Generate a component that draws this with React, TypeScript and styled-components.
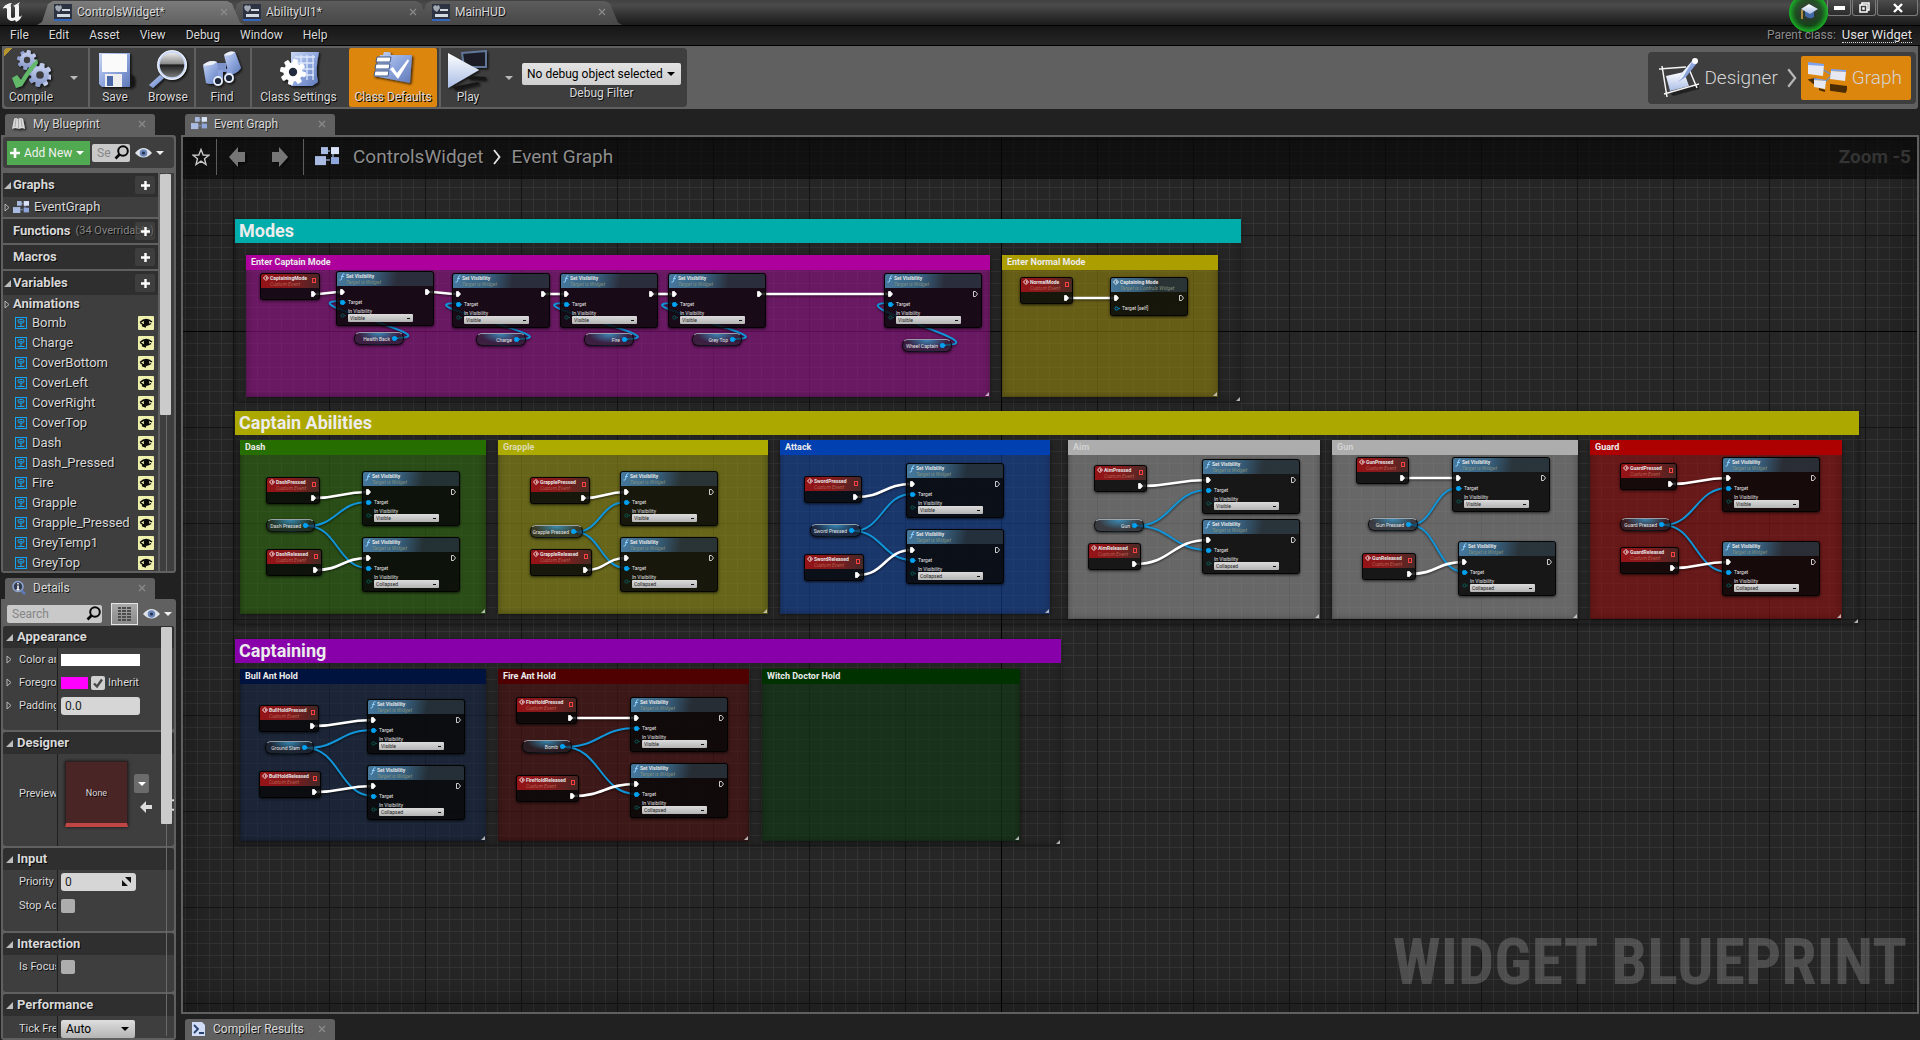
import React, { useId, useState } from 'react';
import styled, { createGlobalStyle, css } from 'styled-components';

/* ------------------------------------------------------------------ */
/* Theme                                                               */
/* ------------------------------------------------------------------ */

const color = {
  window: '#212121',
  frame: '#606060',
  panel: '#3e3e3e',
  header: '#2f2f2f',
  text: '#d8d8d8',
  orange: '#dd860d',
  green: '#51a951',
};

const Global = createGlobalStyle`
  * { box-sizing: border-box; }
  html, body { margin: 0; background: ${color.window}; }
  body, button, input, select {
    font-family: Roboto, "Liberation Sans", sans-serif;
    font-size: 12px;
    line-height: 16px;
    color: ${color.text};
  }
  button, input, select { margin: 0; padding: 0; border: 0; border-radius: 0; outline: 0; }
  button { background: none; cursor: pointer; }
  svg { display: block; flex: none; }
`;

const Window = styled.div`
  display: flex;
  flex-direction: column;
  height: 100vh;
  overflow: hidden;
  background: ${color.window};
  text-shadow: 1px 1px 0 rgba(0, 0, 0, 0.8);
`;

/* ------------------------------------------------------------------ */
/* Title bar                                                           */
/* ------------------------------------------------------------------ */

const TitleBar = styled.header`
  position: relative;
  display: flex;
  flex: none;
  height: 25px;
  padding-left: 3px;
  background: linear-gradient(#414141, #4b4b4b 20%, #2b2b2b 70%, #1b1b1b);
`;

const TabStrip = styled.nav`
  display: flex;
  flex: 1;
  align-items: flex-end;
  padding-left: 10px;
`;

const DocTab = styled.div<{ $active?: boolean; $level: number }>`
  position: relative;
  z-index: ${(p) => p.$level};
  display: flex;
  align-items: center;
  gap: 5px;
  width: 207px;
  height: 24px;
  padding: 0 16px 2px 17px;
  background: ${(p) => (p.$active ? 'linear-gradient(#7b7b7b, #606060)' : 'linear-gradient(#5c5c5c, #474747)')};
  clip-path: polygon(0 100%, 5px 88%, 11px 12%, 16px 0, 190px 0, 195px 10%, 203px 90%, 207px 100%);
  & + & { margin-left: -18px; }
`;

const TabLabel = styled.span`
  flex: 1;
  white-space: nowrap;
`;

const CloseMark = styled.button`
  width: 8px;
  height: 8px;
  color: #8b8b8b;
`;

const WindowControls = styled.div`
  display: flex;
  gap: 1px;
  padding-right: 2px;
`;

const WindowButton = styled.button<{ $wide?: boolean }>`
  display: flex;
  align-items: center;
  justify-content: center;
  width: ${(p) => (p.$wide ? 41 : 24)}px;
  height: 16px;
  border: 1px solid #7c7c7c;
  border-top: 0;
  border-radius: 0 0 3px 3px;
  background: linear-gradient(#4c4c4c, #2b2b2b);
`;

const Tutorial = styled.button`
  position: absolute;
  top: -7px;
  right: 92px;
  z-index: 10;
  display: flex;
  align-items: center;
  justify-content: center;
  width: 39px;
  height: 39px;
  border: 1px solid #16b322;
  border-radius: 50%;
  background: radial-gradient(circle, rgba(40, 60, 42, 0.75) 25%, rgba(20, 90, 25, 0.7) 50%, #19b325 75%);
`;

const MenuBar = styled.div`
  display: flex;
  flex: none;
  align-items: center;
  height: 21px;
  padding-bottom: 2px;
  border-top: 1px solid #000;
  border-bottom: 1px solid #000;
  background: linear-gradient(#161616, #262626);
`;

const MenuItem = styled.button`
  padding: 0 10px;
  text-shadow: 1px 1px 0 #000;
`;

const ParentClass = styled.div`
  display: flex;
  gap: 6px;
  margin-left: auto;
  padding-right: 8px;
  color: #8c8c8c;
`;

const ClassLink = styled.a`
  height: 16px;
  border-bottom: 1px dotted #d8d8d8;
  color: #e2e2e2;
  font-size: 13px;
  text-decoration: none;
`;

/* ------------------------------------------------------------------ */
/* Toolbar                                                             */
/* ------------------------------------------------------------------ */

const ToolbarRow = styled.div`
  display: flex;
  flex: none;
  align-items: center;
  justify-content: space-between;
  height: 63px;
  margin: 0 2px;
  border-radius: 0 0 3px 3px;
  background: ${color.frame};
`;

const Tools = styled.div`
  display: flex;
  height: 59px;
  margin-left: 2px;
  border-radius: 4px;
  background: linear-gradient(135deg, #b6962c 6px, transparent 6px) ${color.panel};
`;

const ToolGroup = styled.div`
  display: flex;
  gap: 4px;
  padding-right: 2px;
  & + & { border-left: 2px solid ${color.frame}; }
`;

const ToolButton = styled.button<{ $width: number; $active?: boolean }>`
  display: flex;
  flex-direction: column;
  align-items: center;
  width: ${(p) => p.$width}px;
  padding-top: 2px;
  border-radius: 2px;
  background: ${(p) => (p.$active ? color.orange : 'none')};
  white-space: nowrap;
  text-shadow: 1px 1px 0 #000;
  svg { margin-bottom: -1px; }
`;

const DropArrow = styled.button<{ $width: number }>`
  display: flex;
  align-items: center;
  justify-content: center;
  width: ${(p) => p.$width}px;
  color: #b9b9b9;
`;

const DebugFilter = styled.div`
  display: flex;
  flex-direction: column;
  align-items: center;
  padding: 15px 4px 0 0;
`;

const SelectWrap = styled.span`
  position: relative;
  display: inline-flex;
  align-items: center;
  svg { position: absolute; right: 6px; pointer-events: none; color: #000; }
`;

const DebugSelect = styled.select`
  appearance: none;
  width: 159px;
  height: 22px;
  padding: 0 18px 0 5px;
  border-radius: 2px;
  background: linear-gradient(#e2e2e2, #cfcfcf);
  color: #000;
`;

const Modes = styled.div`
  display: flex;
  align-items: center;
  height: 52px;
  margin-right: 2px;
  padding: 0 5px 0 5px;
  border-radius: 4px;
  background: ${color.panel};
`;

const ModeButton = styled.button<{ $active?: boolean }>`
  display: flex;
  align-items: center;
  gap: 5px;
  height: 44px;
  padding: 0 9px 0 6px;
  border-radius: 2px;
  background: ${(p) => (p.$active ? color.orange : 'none')};
  color: #d4d4d4;
  font-size: 19px;
  font-weight: 300;
`;

/* ------------------------------------------------------------------ */
/* Panels                                                              */
/* ------------------------------------------------------------------ */

const Workspace = styled.main`
  display: flex;
  flex: 1;
  gap: 5px;
  min-height: 0;
  padding: 5px 1px 0 1px;
`;

const Sidebar = styled.aside`
  display: flex;
  flex: none;
  flex-direction: column;
  gap: 5px;
  width: 175px;
  min-height: 0;
`;

const Dock = styled.div<{ $fixed?: boolean }>`
  display: flex;
  flex: ${(p) => (p.$fixed ? 'none' : '1 1 0')};
  flex-direction: column;
  min-height: 0;
`;

const PanelTab = styled.div`
  display: flex;
  flex: none;
  align-items: center;
  gap: 7px;
  width: 150px;
  height: 21px;
  margin-left: 4px;
  padding: 0 9px 2px 6px;
  border-radius: 3px 3px 0 0;
  background: ${color.frame};
`;

const Panel = styled.section<{ $height?: number }>`
  display: flex;
  flex-direction: column;
  flex: ${(p) => (p.$height ? `0 0 ${p.$height}px` : '1 1 0')};
  min-height: 0;
  padding: 2px;
  border-radius: 0 3px 3px 3px;
  background: ${color.frame};
`;

const FilterRow = styled.div<{ $filled?: boolean }>`
  display: flex;
  flex: none;
  align-items: center;
  height: ${(p) => (p.$filled ? 31 : 25)}px;
  padding-left: 4px;
  border-radius: 3px;
  background: ${(p) => (p.$filled ? color.panel : 'none')};
`;

const AddNew = styled.button`
  display: flex;
  flex: none;
  align-items: center;
  gap: 4px;
  width: 83px;
  height: 24px;
  padding: 0 3px;
  background: ${color.green};
  color: #f0f0f0;
  white-space: nowrap;
`;

const SearchBox = styled.label<{ $width: number; $gap: number }>`
  display: flex;
  flex: none;
  align-items: center;
  width: ${(p) => p.$width}px;
  height: 18px;
  margin-left: ${(p) => p.$gap}px;
  padding: 0 1px 0 5px;
  border-radius: 2px;
  background: #c9c9c9;
`;

const SearchInput = styled.input`
  flex: 1;
  width: 0;
  min-width: 0;
  margin-right: 3px;
  background: none;
  color: #222;
  &::placeholder { color: #868686; opacity: 1; }
`;

const ViewOptions = styled.button`
  display: flex;
  flex: none;
  align-items: center;
  gap: 4px;
  margin-left: 5px;
  color: #f0f0f0;
`;

const MatrixButton = styled.button`
  display: flex;
  flex: none;
  align-items: center;
  justify-content: center;
  width: 27px;
  height: 22px;
  margin-left: 9px;
  border: 1px solid #e4e4e4;
  background: linear-gradient(#a9a9a9, #8a8a8a);
`;

const BlueprintBody = styled.div`
  display: flex;
  flex: 1;
  min-height: 0;
  margin-top: 5px;
  overflow: hidden;
  background: ${color.panel};
`;

const Tree = styled.div`
  display: flex;
  flex: 1;
  flex-direction: column;
  gap: 2px;
  min-width: 0;
  background: ${color.frame};
`;

const TreeSection = styled.div`
  flex: none;
  background: ${color.panel};
`;

const SectionHead = styled.div`
  position: relative;
  display: flex;
  align-items: center;
  height: 24px;
  padding-left: 1px;
  background: ${color.header};
  font-size: 13px;
  font-weight: 700;
  white-space: nowrap;
`;

const Twisty = styled.span<{ $width: number }>`
  display: flex;
  flex: none;
  width: ${(p) => p.$width}px;
`;

const HeadNote = styled.span`
  margin-left: 5px;
  color: #858585;
  font-size: 11px;
  font-weight: 400;
`;

const AddButton = styled.button`
  position: absolute;
  right: 3px;
  display: flex;
  align-items: center;
  justify-content: center;
  width: 20px;
  height: 18px;
  border-radius: 2px;
  background: rgba(75, 75, 75, 0.55);
`;

const TreeRow = styled.div<{ $bold?: boolean; $indent?: number }>`
  display: flex;
  align-items: center;
  height: ${(p) => (p.$bold ? 18 : 20)}px;
  padding: 0 4px 0 ${(p) => p.$indent ?? 1}px;
  font-size: 13px;
  font-weight: ${(p) => (p.$bold ? 700 : 400)};
`;

const RowName = styled.span`
  flex: 1;
  margin-left: 5px;
  white-space: nowrap;
`;

const VisibilityToggle = styled.button`
  display: flex;
  align-items: center;
  justify-content: center;
  width: 16px;
  height: 14px;
  border-radius: 1px;
  background: #efefae;
`;

const ScrollTrack = styled.div`
  flex: none;
  width: 16px;
  padding: 1px 3px 0 2px;
  background: linear-gradient(90deg, ${color.frame} 2px, transparent 2px 8px, #6a6a6a 8px 9px, transparent 9px);
`;

const ScrollThumb = styled.div<{ $height: number }>`
  height: ${(p) => p.$height}px;
  border-radius: 1px;
  background: #cbcbcb;
`;

const DetailsBody = styled.div`
  position: relative;
  flex: 1;
  min-height: 0;
  overflow: hidden;
`;

const DetailsScroll = styled.div`
  position: absolute;
  top: 1px;
  right: 2px;
  bottom: 2px;
  width: 11px;
  background: linear-gradient(90deg, transparent 5px, #6a6a6a 5px 6px, transparent 6px);
`;

const Category = styled.div<{ $body: number }>`
  height: ${(p) => p.$body + 22}px;
  margin-bottom: 2px;
  overflow: hidden;
  border-radius: 3px;
  background: linear-gradient(90deg, transparent 54px, #1f1f1f 54px 55px, transparent 55px) ${color.panel};
`;

const CategoryHead = styled.h2`
  display: flex;
  align-items: center;
  height: 22px;
  margin: 0;
  padding-left: 3px;
  background: ${color.header};
  font-size: 13px;
  font-weight: 700;
  line-height: 16px;
`;

const Prop = styled.div<{ $height?: number }>`
  display: flex;
  align-items: center;
  height: ${(p) => p.$height ?? 23}px;
  font-size: 11px;
`;

const PropName = styled.label`
  display: flex;
  flex: none;
  align-items: center;
  width: 53px;
  margin-right: 5px;
  padding-left: 3px;
  overflow: hidden;
  white-space: nowrap;
`;

const Swatch = styled.button<{ $color: string; $width: number }>`
  width: ${(p) => p.$width}px;
  height: 12px;
  background: ${(p) => p.$color};
`;

const NumberBox = styled.span<{ $width: number }>`
  display: flex;
  align-items: center;
  width: ${(p) => p.$width}px;
  height: 18px;
  padding: 0 5px 0 4px;
  border-radius: 3px;
  background: #d6d6d6;
`;

const NumberInput = styled.input`
  flex: 1;
  min-width: 0;
  width: 0;
  background: none;
  color: #222;
`;

const Check = styled.input.attrs({ type: 'checkbox' })`
  appearance: none;
  width: 14px;
  height: 14px;
  border-radius: 2px;
  background: #adadad;
  &:checked {
    background: #d0d0d0 url("data:image/svg+xml,%3Csvg xmlns='http://www.w3.org/2000/svg' viewBox='0 0 14 14'%3E%3Cpath d='M3 7.5 6 10.5 11 3.5' fill='none' stroke='%23484848' stroke-width='2.4'/%3E%3C/svg%3E");
  }
`;

const InheritLabel = styled.label`
  display: flex;
  align-items: center;
  gap: 3px;
  margin-left: 3px;
`;

const Thumbnail = styled.div`
  display: flex;
  align-items: center;
  justify-content: center;
  width: 66px;
  height: 66px;
  margin-left: 4px;
  border: 1px solid #2a2222;
  border-bottom: 4px solid #c04646;
  background: #4a2526;
  box-shadow: 0 0 3px #111;
  font-size: 9px;
`;

const AssetActions = styled.div`
  display: flex;
  flex-direction: column;
  gap: 6px;
  margin-left: 6px;
`;

const AssetMenu = styled.button`
  display: flex;
  align-items: center;
  justify-content: center;
  width: 15px;
  height: 19px;
  border-radius: 2px;
  background: #6b6b6b;
`;

const AssetTools = styled.div`
  display: flex;
  align-items: center;
  gap: 12px;
  width: 40px;
  padding-left: 6px;
`;

const TickSelect = styled.select`
  appearance: none;
  width: 74px;
  height: 18px;
  padding-left: 5px;
  border-radius: 2px;
  background: linear-gradient(#dedede, #b4b4b4);
  color: #000;
`;

/* ------------------------------------------------------------------ */
/* Graph                                                               */
/* ------------------------------------------------------------------ */

const GraphColumn = styled.div`
  display: flex;
  flex: 1;
  flex-direction: column;
  min-width: 0;
`;

const GraphFrame = styled.div`
  flex: 1;
  min-height: 0;
  margin-bottom: 5px;
  padding: 2px;
  background: ${color.frame};
`;

const Canvas = styled.div`
  position: relative;
  height: 100%;
  overflow: hidden;
  background-color: #262626;
  background-image:
    linear-gradient(#000, #000),
    linear-gradient(#000, #000),
    linear-gradient(90deg, #151515 1px, transparent 1px),
    linear-gradient(#151515 1px, transparent 1px),
    linear-gradient(90deg, #343434 1px, transparent 1px),
    linear-gradient(#343434 1px, transparent 1px);
  background-size: 1px 100%, 100% 1px, 96px 96px, 96px 96px, 12px 12px, 12px 12px;
  background-position: 818px 0, 0 194px, 50px 2px, 50px 2px, 2px 2px, 2px 2px;
  background-repeat: no-repeat, no-repeat, repeat, repeat, repeat, repeat;
`;

const Vignette = styled.div`
  position: absolute;
  inset: 0;
  pointer-events: none;
  box-shadow: inset 0 0 50px rgba(0, 0, 0, 0.4);
`;

const Breadcrumbs = styled.div`
  position: relative;
  z-index: 2;
  display: flex;
  align-items: center;
  height: 42px;
  padding: 0 6px 2px 9px;
  background: rgba(8, 8, 8, 0.66);
  color: #8e8e8e;
  font-size: 19px;
`;

const BarRule = styled.span<{ $before: number; $after: number }>`
  width: 1px;
  height: 36px;
  margin: 0 ${(p) => p.$after}px 0 ${(p) => p.$before}px;
  background: #5d5d5d;
`;

const NavButton = styled.button<{ $before?: number; $after?: number }>`
  margin: 0 ${(p) => p.$after ?? 0}px 0 ${(p) => p.$before ?? 0}px;
`;

const Crumb = styled.a`
  color: inherit;
  text-decoration: none;
`;

const ZoomLabel = styled.span`
  margin-left: auto;
  color: #343434;
  font-weight: 700;
  text-shadow: none;
`;

const Watermark = styled.div`
  position: absolute;
  right: 10px;
  bottom: 12px;
  color: rgba(150, 150, 150, 0.36);
  font-family: "Roboto Condensed", "Liberation Sans Narrow", Roboto, sans-serif;
  font-size: 64px;
  font-weight: 700;
  line-height: 74px;
  text-shadow: none;
  white-space: nowrap;
`;

/* Position of the view's top left corner in graph space. */
const VIEW = { x: 183, y: 137 };

type Box = { $x: number; $y: number; $w?: number; $h?: number };

const placed = (p: Box) => ({
  style: { left: p.$x - VIEW.x, top: p.$y - VIEW.y, width: p.$w, height: p.$h },
});

const Comment = styled.div.attrs<Box>(placed)<Box & { $fill: string }>`
  position: absolute;
  border: 1px solid rgba(0, 0, 0, 0.18);
  background: ${(p) => p.$fill};
  box-shadow: 0 1px 4px rgba(0, 0, 0, 0.5), inset 0 0 6px rgba(0, 0, 0, 0.2);
  & > svg { position: absolute; right: 0; bottom: 0; }
`;

const CommentTitle = styled.h3<{ $bar: string; $large?: boolean; $ink?: string }>`
  margin: -1px;
  height: ${(p) => (p.$large ? 24 : 15)}px;
  padding-left: ${(p) => (p.$large ? 4 : 5)}px;
  background: ${(p) => p.$bar};
  color: ${(p) => p.$ink ?? '#ececec'};
  font-size: ${(p) => (p.$large ? 18 : 9)}px;
  line-height: ${(p) => (p.$large ? 24 : 15)}px;
  font-weight: 700;
  text-shadow: none;
`;

const nodeBase = css`
  position: absolute;
  overflow: hidden;
  border: 1px solid rgba(0, 0, 0, 0.75);
  border-radius: 3px;
  background: rgba(8, 8, 8, 0.84);
  box-shadow: 0 1px 3px rgba(0, 0, 0, 0.7);
  color: #e4e4e4;
  font-size: 5px;
  line-height: 6px;
  text-shadow: none;
  white-space: nowrap;
`;

const EventNode = styled.div.attrs<Box>(placed)<Box>`
  ${nodeBase}
  height: 27px;
`;

const FunctionNode = styled.div.attrs<Box>(placed)<Box>`
  ${nodeBase}
`;

const NodeHead = styled.div<{ $kind: 'event' | 'function' }>`
  display: flex;
  gap: 1px;
  height: 14px;
  padding: 1px 3px 0 2px;
  background: ${(p) =>
    p.$kind === 'event'
      ? 'linear-gradient(90deg, #951317, #861a1c 50%, rgba(110, 60, 55, 0.55))'
      : 'linear-gradient(100deg, #47799d, #37607e 38%, rgba(60, 80, 95, 0.5) 62%)'};
`;

const NodeNames = styled.div`
  display: flex;
  flex: 1;
  flex-direction: column;
`;

const NodeTitle = styled.b`
  font-weight: 700;
  line-height: 6px;
`;

const NodeNote = styled.i<{ $kind: 'event' | 'function' }>`
  color: ${(p) => (p.$kind === 'event' ? '#b0604f' : '#84927c')};
  line-height: 6px;
`;

const Delegate = styled.span`
  width: 4px;
  height: 5px;
  margin-top: 3px;
  border: 1px solid #ff4040;
`;

const PinRow = styled.div<{ $height: number }>`
  display: flex;
  align-items: center;
  justify-content: space-between;
  height: ${(p) => p.$height}px;
  padding: 0 3px;
`;

const PinLabel = styled.span`
  display: flex;
  flex: 1;
  gap: 2px;
  align-items: center;
`;

const ValueRow = styled.div`
  display: flex;
  gap: 2px;
  align-items: center;
  padding: 2px 0 0 3px;
`;

const ValueColumn = styled.label`
  display: flex;
  flex-direction: column;
`;

const ValueSelect = styled.select`
  appearance: none;
  width: 65px;
  height: 8px;
  padding-left: 2px;
  border-radius: 1px;
  background:
    linear-gradient(#111, #111) 59px 4px / 3px 1px no-repeat,
    linear-gradient(#dcdcdc, #b4b4b4);
  color: #222;
  font-size: 5px;
  line-height: 8px;
`;

const VariableNode = styled.div.attrs<Box>(placed)<Box>`
  ${nodeBase}
  display: flex;
  align-items: center;
  justify-content: flex-end;
  gap: 2px;
  height: 13px;
  padding-right: 5px;
  border-top-color: rgba(190, 200, 210, 0.75);
  border-radius: 6px;
  background:
    radial-gradient(ellipse at 50% 0, rgba(60, 160, 210, 0.8), transparent 60%),
    rgba(30, 34, 44, 0.62);
`;

const Wires = styled.svg`
  position: absolute;
  inset: 0;
  width: 100%;
  height: 100%;
  fill: none;
  filter: drop-shadow(0 1px 1px rgba(0, 0, 0, 0.6));
`;

/* ------------------------------------------------------------------ */
/* Icons                                                               */
/* ------------------------------------------------------------------ */

const PaintDefs = styled.svg`
  position: absolute;
`;

const Paints = () => (
  <PaintDefs width="0" height="0" aria-hidden="true">
    <defs>
      <linearGradient id="steel" x1="0" y1="0" x2="1" y2="1">
        <stop offset="0" stopColor="#c9d6f4" />
        <stop offset="0.5" stopColor="#8fa7de" />
        <stop offset="1" stopColor="#5f79b8" />
      </linearGradient>
      <linearGradient id="cog" x1="0" y1="0" x2="0" y2="1">
        <stop offset="0" stopColor="#c3cdec" />
        <stop offset="1" stopColor="#8b9ccc" />
      </linearGradient>
      <linearGradient id="pale" x1="0" y1="0" x2="0" y2="1">
        <stop offset="0" stopColor="#ffffff" />
        <stop offset="1" stopColor="#a9bde6" />
      </linearGradient>
      <linearGradient id="lens" x1="0" y1="0" x2="0" y2="1">
        <stop offset="0" stopColor="#f4f4f4" />
        <stop offset="0.45" stopColor="#8c8c8c" />
        <stop offset="0.5" stopColor="#1d1d1d" />
        <stop offset="1" stopColor="#858585" />
      </linearGradient>
      <filter id="cast" x="-20%" y="-20%" width="150%" height="150%">
        <feDropShadow dx="1.5" dy="1.5" stdDeviation="1" floodColor="#000" floodOpacity="0.75" />
      </filter>
    </defs>
  </PaintDefs>
);

const Gear = ({ x, y, r, fill = 'url(#cog)', hole = '#3e3e3e' }: { x: number; y: number; r: number; fill?: string; hole?: string }) => (
  <g transform={`translate(${x} ${y})`}>
    {[0, 45, 90, 135].map((a) => (
      <rect key={a} x={-r * 0.2} y={-r} width={r * 0.4} height={r * 2} rx={r * 0.1} transform={`rotate(${a + 12})`} fill={fill} />
    ))}
    <circle r={r * 0.74} fill={fill} />
    <circle r={r * 0.32} fill={hole} />
  </g>
);

const CompileIcon = () => (
  <svg width="40" height="40" viewBox="0 0 40 40" filter="url(#cast)">
    <Gear x={16} y={10} r={10} />
    <Gear x={29} y={25} r={12} />
    <path d="M1 28 6 25 10 30 Q16 19 26 9 L27 13 Q18 24 11 36 L5 38Z" fill="#62b96b" />
  </svg>
);

const SaveIcon = () => (
  <svg width="40" height="40" viewBox="0 0 40 40" filter="url(#cast)">
    <path d="M34 22 39 27V35L34 38Z" fill="#161616" />
    <path d="M4 3H35V37H7L4 34Z" fill="url(#steel)" />
    <rect x="7" y="4" width="25" height="18" fill="#fafafa" />
    <rect x="10" y="24" width="17" height="13" fill="#eee" />
    <rect x="12" y="26" width="6" height="10" fill="#4c67a8" />
  </svg>
);

const BrowseIcon = () => (
  <svg width="40" height="40" viewBox="0 0 40 40" filter="url(#cast)">
    <path d="M1 35 12 25 16 28 5 38Z" fill="url(#steel)" />
    <circle cx="24" cy="15" r="13.500" fill="url(#lens)" stroke="#c9d8f6" strokeWidth="2.500" />
    <circle cx="24" cy="15" r="14.500" fill="none" stroke="#fff" strokeWidth="0.800" />
  </svg>
);

const FindIcon = () => (
  <svg width="40" height="40" viewBox="0 0 40 40" filter="url(#cast)">
    <rect x="15" y="13" width="9" height="9" fill="#7b93cc" />
    <path d="M1 15 Q8 9 15 12 L18 30 Q11 36 4 33Z" fill="url(#steel)" />
    <path d="M22 5 Q27 0 33 2 L39 18 Q35 24 27 25Z" fill="url(#steel)" />
    <path d="M1 15 Q8 9 15 12 Q9 17 1 15ZM22 5 Q27 0 33 2 Q28 7 22 5Z" fill="#eceff5" />
    <path d="M16 20 21 20 21 29 16 29ZM24 19 29 18 31 27 25 27Z" fill="#8aa2da" />
    <circle cx="16" cy="31" r="4" fill="#1d2638" stroke="#e6edfb" strokeWidth="1.800" />
    <circle cx="27" cy="28" r="4" fill="#1d2638" stroke="#e6edfb" strokeWidth="1.800" />
  </svg>
);

const SettingsIcon = () => (
  <svg width="40" height="40" viewBox="0 0 40 40" filter="url(#cast)">
    <path d="M12 2H40Q36 20 39 32L33 36H12Z" fill="url(#steel)" />
    <path d="M16 7H36M16 13H35M20 19H35M24 25H35M22 5V18M28 5V30M34 5V30" stroke="#dbe6fb" strokeWidth="1.300" fill="none" />
    <Gear x={14} y={22} r={13} fill="#fff" hole="#222b3c" />
  </svg>
);

const DefaultsIcon = () => (
  <svg width="40" height="40" viewBox="0 0 40 40" filter="url(#cast)">
    <path d="M7 5H10L11 2H17L18 5H39L37 33 1 26Z" fill="url(#steel)" />
    <path d="M4 7H18L17 12H3ZM3 14H17L16 19H2ZM2 21H16L15 26H1Z" fill="#fff" stroke="#425887" strokeWidth="1" />
    <path d="M17 19 20 17 24 23 35 9 36 11 25 29Z" fill="#fff" />
  </svg>
);

const PlayIcon = () => (
  <svg width="40" height="40" viewBox="0 0 40 40" filter="url(#cast)">
    <path d="M14 3 38 1V17L16 17Z" fill="#1c1f25" stroke="#60779a" strokeWidth="2" />
    <path d="M22 26 38 27 38 30 20 29ZM4 37 30 32 32 34 8 40Z" fill="#161616" />
    <path d="M0 3 31 20 0 38Z" fill="url(#pale)" />
  </svg>
);

const DesignerIcon = () => (
  <svg width="40" height="42" viewBox="0 0 40 42">
    <path d="M10 34 40 28 40 32 14 39Z" fill="#151515" opacity="0.7" />
    <path d="M7 19 25 15 30 29 11 34Z" fill="url(#pale)" />
    <path d="M0 12 27 10M3 9 8 40M5 37 40 27M30 12 38 31" stroke="#f4f4f4" strokeWidth="1.500" fill="none" />
    <path d="M19 25 22 17 34 3 38 6 27 20Z" fill="url(#steel)" />
    <path d="M19 25 22 17 34 3 24 20Z" fill="#e9f0fd" />
    <circle cx="36" cy="4" r="3" fill="#fff" />
  </svg>
);

const GraphModeIcon = () => (
  <svg width="40" height="36" viewBox="0 0 40 36">
    <path d="M3 20 8 19 8 24ZM24 25 40 27 38 32 24 30ZM12 29 18 31Z" fill="#4b2d05" stroke="#4b2d05" strokeWidth="2" />
    <path d="M15 9 25 15M24 16 17 23" stroke="#7d8fae" strokeWidth="1.500" />
    <path d="M1 3 17 5 16 16 1 14Z" fill="#e6e9f2" />
    <path d="M1 2 17 4V6L1 5ZM24 9 39 10V12L24 11ZM7 18 19 20V21L7 20Z" fill="#7ea3ec" />
    <path d="M24 11 39 12 38 21 23 19ZM7 20 19 21 18 29 7 27Z" fill="#e6e9f2" />
  </svg>
);

const DocIcon = () => (
  <svg width="18" height="17" viewBox="0 0 18 17">
    <rect width="18" height="17" fill="#2c3444" />
    <rect y="15" width="18" height="2" fill="#3566bc" />
    <path d="M1 3 3 1 5 2 7 1 8 4 5 8 2 6Z" fill="#a3a9b2" />
    <path d="M8 5H16V7H8ZM3 10H16V13H3Z" fill="#d5dae2" />
  </svg>
);

const UnrealLogo = () => (
  <svg width="24" height="24" viewBox="0 0 24 24">
    <path
      d="M-1 9 Q3 3 9 3 Q7 5 8 7 V17 Q9 19 12 17 V8 Q12 6 10 6 Q14 4 17 2 Q15 5 16 6 V16 Q17 18 19 15 Q18 20 13 22 L12 20 Q9 22 6 20 Q4 19 4 17 V9 Q3 7 -1 9Z"
      fill="#f4f4f4"
    />
  </svg>
);

const CapIcon = () => (
  <svg width="20" height="20" viewBox="0 0 20 20">
    <path d="M6 8 15 8 15 14 Q11 17 6 13Z" fill="#4268a4" />
    <path d="M2 6 10 1 19 6 11 11Z" fill="url(#pale)" />
    <path d="M3 7V16" stroke="#d9a34a" strokeWidth="1.500" />
  </svg>
);

const Cross = () => (
  <svg width="8" height="8" viewBox="0 0 8 8">
    <path d="M1 1 7 7M7 1 1 7" stroke="currentColor" strokeWidth="1.200" />
  </svg>
);

const Down = ({ size = 8, fill = 'currentColor' }: { size?: number; fill?: string }) => (
  <svg width={size} height={size / 2} viewBox="0 0 8 4">
    <path d="M0 0H8L4 4Z" fill={fill} />
  </svg>
);

const Plus = ({ size = 9 }: { size?: number }) => (
  <svg width={size} height={size} viewBox="0 0 9 9">
    <path d="M3.300 0H5.700V3.300H9V5.700H5.700V9H3.300V5.700H0V3.300H3.300Z" fill="#fff" />
  </svg>
);

const Opened = () => (
  <svg width="7" height="7" viewBox="0 0 7 7">
    <path d="M7 0V7H0Z" fill="#bdbdbd" />
  </svg>
);

const Closed = () => (
  <svg width="6" height="9" viewBox="0 0 6 9">
    <path d="M1 1 5 4.500 1 8Z" fill="none" stroke="#b5b5b5" />
  </svg>
);

const Magnifier = ({ ink = '#080808' }: { ink?: string }) => (
  <svg width="15" height="15" viewBox="0 0 15 15">
    <circle cx="9" cy="6" r="4.800" fill="none" stroke={ink} strokeWidth="2" />
    <path d="M5.500 9.500 1.500 13.500" stroke={ink} strokeWidth="2.600" />
  </svg>
);

const BlueEye = () => (
  <svg width="17" height="12" viewBox="0 0 17 12">
    <path d="M0 6 Q8.500 -4 17 6 Q8.500 15 0 6Z" fill="#dfe3ea" />
    <circle cx="8.500" cy="6" r="3.800" fill="#6b86b9" />
    <circle cx="8.500" cy="6" r="1.600" fill="#27344f" />
  </svg>
);

const DarkEye = () => (
  <svg width="14" height="10" viewBox="0 0 14 10">
    <path d="M1 4.500 Q7 -1 13 4 M1.500 5 Q7 9 12 5.500 M3 7.500 7 9" fill="none" stroke="#0a0a0a" strokeWidth="1.500" />
    <circle cx="7.500" cy="4.500" r="2.700" fill="#0a0a0a" />
  </svg>
);

const GraphGlyph = ({ size = 16 }: { size?: number }) => (
  <svg width={size} height={size * 0.8} viewBox="0 0 24 19">
    <path d="M9 4H15M9 13H15M18 6V11" stroke="#8192b5" strokeWidth="1.500" />
    <rect x="6" y="0" width="7" height="7" fill="#a9bbe2" />
    <rect x="16" y="0" width="8" height="7" fill="#dbe5fa" />
    <rect x="0" y="9" width="11" height="9" fill="#a9bbe2" />
    <rect x="16" y="10" width="8" height="7" fill="#8ea6dc" />
  </svg>
);

const BookIcon = () => (
  <svg width="15" height="14" viewBox="0 0 15 14" filter="url(#cast)">
    <path d="M3 2 Q5 0 7 2 Q10 0 12 2L14 12Q11 10 8 12Q4 10 1 12Z" fill="#dadada" />
    <path d="M7.500 2V12M5 2 4 10M10 2 11 10" stroke="#9a9a9a" strokeWidth="0.800" />
  </svg>
);

const InfoIcon = () => (
  <svg width="15" height="15" viewBox="0 0 15 15">
    <circle cx="7" cy="6.500" r="5" fill="#30394e" stroke="#8fa5d4" strokeWidth="1.500" />
    <path d="M10.500 10.500 14 14" stroke="#5d79bd" strokeWidth="2.500" />
    <path d="M7 3V4.500M7 5.500V10M5.500 9.700H8.500" stroke="#fff" strokeWidth="1.500" />
  </svg>
);

const CompilerIcon = () => (
  <svg width="15" height="15" viewBox="0 0 15 15">
    <path d="M1 1H11L14 4V15H1Z" fill="#cfdcf3" />
    <path d="M3 4 7 8 3 12M8 12H13" fill="none" stroke="#29406f" strokeWidth="1.800" />
  </svg>
);

const WidgetIcon = () => (
  <svg width="12" height="12" viewBox="0 0 12 12" fill="none" stroke="#14a4f4">
    <rect x="0.500" y="0.500" width="11" height="11" />
    <path d="M3 4 Q3 2.500 4.500 2.500 H7.500 Q9 2.500 9 4 Q9 6 7 6 H5 Q3 6 3 4ZM6 6V9.500M2.500 9.500H9.500M4.500 4.300H7.500" />
  </svg>
);

const MatrixIcon = () => (
  <svg width="14" height="14" viewBox="0 0 14 14" fill="#4c4c4c">
    {[0, 3, 6, 9, 12].map((y) => (
      <path key={y} d={`M0 ${y}H3V${y + 2}H0ZM4 ${y}H8V${y + 2}H4ZM9 ${y}H13V${y + 2}H9Z`} />
    ))}
  </svg>
);

const StarIcon = () => (
  <svg width="18" height="18" viewBox="0 0 18 18">
    <path d="M9 1.500 11.200 7 17 7.200 12.500 10.800 14 16.500 9 13.200 4 16.500 5.500 10.800 1 7.200 6.800 7Z" fill="none" stroke="#c9c9c9" strokeWidth="1.400" />
  </svg>
);

const ArrowIcon = ({ flip }: { flip?: boolean }) => (
  <svg width="17" height="21" viewBox="0 0 17 21" filter="url(#cast)">
    <path transform={flip ? 'matrix(-1 0 0 1 17 0)' : undefined} d="M0 10 9 0V5H16V15H9V20Z" fill="#767676" />
  </svg>
);

const Chevron = ({ h, ink }: { h: number; ink: string }) => (
  <svg width={h / 2} height={h} viewBox="0 0 8 16">
    <path d="M1 1 6.500 8 1 15" fill="none" stroke={ink} strokeWidth="1.800" />
  </svg>
);

const Grip = () => (
  <svg width="4" height="4" viewBox="0 0 4 4">
    <path d="M4 0V4H0Z" fill="rgba(225,225,225,0.75)" />
  </svg>
);

const ExecPin = ({ open }: { open?: boolean }) => (
  <svg width="5" height="6" viewBox="0 0 5 6">
    <path d="M0.500 0.500H2.500L4.500 3 2.500 5.500H0.500Z" fill={open ? 'none' : '#fff'} stroke="#fff" strokeWidth="0.800" />
  </svg>
);

const DataPin = ({ open, ink = '#00a2f2' }: { open?: boolean; ink?: string }) => (
  <svg width="6" height="5" viewBox="0 0 6 5">
    <circle cx="2.500" cy="2.500" r={open ? 1.600 : 2.200} fill={open ? 'none' : ink} stroke={ink} strokeWidth="0.800" />
    <path d="M4.700 1.500 6 2.500 4.700 3.500Z" fill={ink} />
  </svg>
);

const EventGlyph = () => (
  <svg width="6" height="6" viewBox="0 0 6 6">
    <path d="M3 0.500 5.500 3 3 5.500 0.500 3Z" fill="none" stroke="#fff" strokeWidth="0.900" />
    <path d="M3 2 4.500 3 3 4Z" fill="#fff" />
  </svg>
);

const FunctionGlyph = () => (
  <svg width="6" height="8" viewBox="0 0 6 8">
    <path d="M5.500 1 Q4 0 3.500 2 L2.500 6 Q2 7.700 0.500 7M2 3.500H4.800" fill="none" stroke="#8fd0ff" strokeWidth="1" />
  </svg>
);

/* ------------------------------------------------------------------ */
/* Graph content                                                       */
/* ------------------------------------------------------------------ */

type Placed = { x: number; y: number; w: number; name: string };
type SetData = { x: number; y: number; value: string };
type Pair = { events: Placed[]; sets: SetData[]; variable: Placed };
type CommentData = { x: number; y: number; w: number; h: number; title: string; bar: string; fill: string; ink?: string; large?: boolean };

const shade = 'rgba(30, 30, 30, 0.25)';

const comments: CommentData[] = [
  { x: 235, y: 219, w: 1006, h: 183, title: 'Modes', bar: '#00adab', fill: shade, large: true },
  { x: 246, y: 255, w: 744, h: 142, title: 'Enter Captain Mode', bar: '#ad009d', fill: 'rgba(168, 15, 155, 0.52)' },
  { x: 1002, y: 255, w: 216, h: 142, title: 'Enter Normal Mode', bar: '#ad9e00', fill: 'rgba(168, 150, 10, 0.5)' },
  { x: 235, y: 411, w: 1624, h: 213, title: 'Captain Abilities', bar: '#ada800', fill: shade, large: true },
  { x: 240, y: 440, w: 246, h: 174, title: 'Dash', bar: '#276e00', fill: 'rgba(48, 115, 12, 0.52)' },
  { x: 498, y: 440, w: 270, h: 174, title: 'Grapple', bar: '#adaa00', fill: 'rgba(168, 165, 15, 0.5)', ink: '#dedcb4' },
  { x: 780, y: 440, w: 270, h: 174, title: 'Attack', bar: '#0040b0', fill: 'rgba(18, 72, 175, 0.52)' },
  { x: 1068, y: 440, w: 252, h: 179, title: 'Aim', bar: '#adadad', fill: 'rgba(170, 170, 170, 0.5)', ink: '#d2d2d2' },
  { x: 1332, y: 440, w: 246, h: 179, title: 'Gun', bar: '#adadad', fill: 'rgba(170, 170, 170, 0.5)', ink: '#d2d2d2' },
  { x: 1590, y: 440, w: 252, h: 179, title: 'Guard', bar: '#ad0000', fill: 'rgba(170, 12, 12, 0.5)' },
  { x: 235, y: 639, w: 826, h: 206, title: 'Captaining', bar: '#8800aa', fill: shade, large: true },
  { x: 240, y: 669, w: 246, h: 172, title: 'Bull Ant Hold', bar: '#00133f', fill: 'rgba(18, 38, 74, 0.5)' },
  { x: 498, y: 669, w: 251, h: 172, title: 'Fire Ant Hold', bar: '#4f0000', fill: 'rgba(84, 14, 14, 0.52)' },
  { x: 762, y: 669, w: 258, h: 172, title: 'Witch Doctor Hold', bar: '#003200', fill: 'rgba(16, 58, 20, 0.6)' },
];

const pair = (
  pressed: Placed, released: Placed, variable: Placed, top: [number, number], bottom: [number, number],
): Pair => ({
  events: [pressed, released],
  variable,
  sets: [
    { x: top[0], y: top[1], value: 'Visible' },
    { x: bottom[0], y: bottom[1], value: 'Collapsed' },
  ],
});

const at = (name: string, x: number, y: number, w: number): Placed => ({ name, x, y, w });

const pairs: Pair[] = [
  pair(at('DashPressed', 266, 477, 54), at('DashReleased', 266, 549, 56), at('Dash Pressed', 266, 519, 49), [362, 471], [362, 537]),
  pair(at('GrapplePressed', 530, 477, 60), at('GrappleReleased', 530, 549, 62), at('Grapple Pressed', 530, 525, 53), [620, 471], [620, 537]),
  pair(at('SwordPressed', 804, 476, 58), at('SwordReleased', 804, 554, 60), at('Sword Pressed', 810, 524, 51), [906, 463], [906, 529]),
  pair(at('AimPressed', 1094, 465, 53), at('AimReleased', 1088, 543, 53), at('Gun', 1094, 519, 50), [1202, 459], [1202, 519]),
  pair(at('GunPressed', 1356, 457, 53), at('GunReleased', 1362, 553, 54), at('Gun Pressed', 1368, 518, 50), [1452, 457], [1458, 541]),
  pair(at('GuardPressed', 1620, 463, 57), at('GuardReleased', 1620, 547, 59), at('Guard Pressed', 1620, 518, 51), [1722, 457], [1722, 541]),
  pair(at('BullHoldPressed', 259, 705, 60), at('BullHoldReleased', 259, 771, 62), at('Ground Slam', 265, 741, 49), [367, 699], [367, 765]),
  pair(at('FireHoldPressed', 516, 697, 61), at('FireHoldReleased', 516, 775, 63), at('Bomb', 522, 740, 50), [630, 697], [630, 763]),
];

const captainEvent = at('CaptainingMode', 260, 273, 60);
const captainSets: SetData[] = [
  { x: 336, y: 271, value: 'Visible' },
  { x: 452, y: 273, value: 'Visible' },
  { x: 560, y: 273, value: 'Visible' },
  { x: 668, y: 273, value: 'Visible' },
  { x: 884, y: 273, value: 'Visible' },
];
const captainVars: Placed[] = [
  at('Health Back', 354, 332, 50),
  at('Charge', 476, 333, 50),
  at('Fire', 584, 333, 50),
  at('Grey Top', 692, 333, 50),
  at('Wheel Captain', 902, 339, 50),
];
const normalEvent = at('NormalMode', 1020, 277, 53);

const curve = (x1: number, y1: number, x2: number, y2: number, reach = (x2 - x1) / 2) => {
  const [ax, ay, bx, by] = [x1 - VIEW.x, y1 - VIEW.y, x2 - VIEW.x, y2 - VIEW.y];
  return `M${ax} ${ay}C${ax + reach} ${ay} ${bx - reach} ${by} ${bx} ${by}`;
};

const execWires = [
  ...pairs.flatMap((p) => p.events.map((ev, i) => curve(ev.x + ev.w - 6, ev.y + 21, p.sets[i].x + 6, p.sets[i].y + 21))),
  curve(captainEvent.x + 54, captainEvent.y + 21, captainSets[0].x + 6, captainSets[0].y + 21),
  ...captainSets.slice(1).map((s, i) => curve(captainSets[i].x + 92, captainSets[i].y + 21, s.x + 6, s.y + 21)),
  curve(normalEvent.x + 47, normalEvent.y + 21, 1116, normalEvent.y + 21),
];

const dataWires = [
  ...pairs.flatMap((p) => p.sets.map((s) => curve(p.variable.x + p.variable.w - 8, p.variable.y + 7, s.x + 6, s.y + 31))),
  ...captainSets.map((s, i) => curve(captainVars[i].x + 42, captainVars[i].y + 6, s.x + 6, s.y + 30, 58)),
];

const EventView = ({ x, y, w, name }: Placed) => (
  <EventNode $x={x} $y={y} $w={w}>
    <NodeHead $kind="event">
      <EventGlyph />
      <NodeNames>
        <NodeTitle>{name}</NodeTitle>
        <NodeNote $kind="event">Custom Event</NodeNote>
      </NodeNames>
      <Delegate />
    </NodeHead>
    <PinRow $height={12}>
      <span />
      <ExecPin />
    </PinRow>
  </EventNode>
);

const SetView = ({ x, y, value, last }: SetData & { last: boolean }) => (
  <FunctionNode $x={x} $y={y} $w={98} $h={55}>
    <NodeHead $kind="function">
      <FunctionGlyph />
      <NodeNames>
        <NodeTitle>Set Visibility</NodeTitle>
        <NodeNote $kind="function">Target is Widget</NodeNote>
      </NodeNames>
    </NodeHead>
    <PinRow $height={12}>
      <ExecPin />
      <ExecPin open={last} />
    </PinRow>
    <PinRow $height={8}>
      <PinLabel>
        <DataPin />
        Target
      </PinLabel>
    </PinRow>
    <ValueRow>
      <DataPin open ink="#0b6a63" />
      <ValueColumn>
        In Visibility
        <ValueSelect defaultValue={value}>
          <option>Visible</option>
          <option>Collapsed</option>
        </ValueSelect>
      </ValueColumn>
    </ValueRow>
  </FunctionNode>
);

const VariableView = ({ x, y, w, name }: Placed) => (
  <VariableNode $x={x} $y={y} $w={w}>
    {name}
    <DataPin />
  </VariableNode>
);

const Graph = () => (
  <Canvas>
    <Vignette />
    {comments.map((c) => (
      <Comment key={c.title} $x={c.x} $y={c.y} $w={c.w} $h={c.h} $fill={c.fill}>
        <CommentTitle $bar={c.bar} $large={c.large} $ink={c.ink}>{c.title}</CommentTitle>
        <Grip />
      </Comment>
    ))}
    <Wires aria-hidden="true">
      {dataWires.map((d) => <path key={d} d={d} stroke="#1195d8" strokeWidth="2" />)}
      {execWires.map((d) => <path key={d} d={d} stroke="#fff" strokeWidth="2.600" />)}
    </Wires>
    {[captainEvent, normalEvent, ...pairs.flatMap((p) => p.events)].map((ev) => <EventView key={ev.name} {...ev} />)}
    {captainSets.map((s, i) => <SetView key={s.x} {...s} last={i === captainSets.length - 1} />)}
    {pairs.flatMap((p) => p.sets).map((s) => <SetView key={`${s.x}-${s.y}`} {...s} last />)}
    {[...captainVars, ...pairs.map((p) => p.variable)].map((v) => <VariableView key={v.name} {...v} />)}
    <FunctionNode $x={1110} $y={277} $w={78} $h={39}>
      <NodeHead $kind="function">
        <EventGlyph />
        <NodeNames>
          <NodeTitle>Captaining Mode</NodeTitle>
          <NodeNote $kind="function">Target is Controls Widget</NodeNote>
        </NodeNames>
      </NodeHead>
      <PinRow $height={12}>
        <ExecPin />
        <ExecPin open />
      </PinRow>
      <PinRow $height={8}>
        <PinLabel>
          <DataPin open />
          Target [self]
        </PinLabel>
      </PinRow>
    </FunctionNode>
    <Watermark>WIDGET BLUEPRINT</Watermark>
    <Breadcrumbs>
      <NavButton aria-label="Bookmark"><StarIcon /></NavButton>
      <BarRule $before={6} $after={12} />
      <NavButton aria-label="Back" $after={25}><ArrowIcon /></NavButton>
      <NavButton aria-label="Forward"><ArrowIcon flip /></NavButton>
      <BarRule $before={15} $after={11} />
      <NavButton aria-label="Graph" $after={14}><GraphGlyph size={24} /></NavButton>
      <Crumb href="#widget">ControlsWidget</Crumb>
      <NavButton aria-label="Path" $before={9} $after={11}><Chevron h={16} ink="#e6e6e6" /></NavButton>
      <Crumb href="#event-graph">Event Graph</Crumb>
      <ZoomLabel>Zoom -5</ZoomLabel>
    </Breadcrumbs>
  </Canvas>
);

/* ------------------------------------------------------------------ */
/* Side panels                                                         */
/* ------------------------------------------------------------------ */

const variables = [
  'Bomb', 'Charge', 'CoverBottom', 'CoverLeft', 'CoverRight', 'CoverTop', 'Dash',
  'Dash_Pressed', 'Fire', 'Grapple', 'Grapple_Pressed', 'GreyTemp1', 'GreyTop',
];

const PanelHeading = ({ icon, title }: { icon: React.ReactNode; title: string }) => (
  <PanelTab>
    {icon}
    <TabLabel>{title}</TabLabel>
    <CloseMark aria-label={`Close ${title}`}><Cross /></CloseMark>
  </PanelTab>
);

const TreeHead = ({ title, note, open }: { title: string; note?: string; open?: boolean }) => (
  <SectionHead>
    <Twisty $width={9}>{open && <Opened />}</Twisty>
    {title}
    {note && <HeadNote>{note}</HeadNote>}
    <AddButton aria-label={`Add to ${title}`}><Plus /></AddButton>
  </SectionHead>
);

const MyBlueprint = () => (
  <Dock $fixed>
    <PanelHeading icon={<BookIcon />} title="My Blueprint" />
    <Panel $height={438}>
      <FilterRow $filled>
        <AddNew><Plus size={10} />Add New<Down size={8} fill="#fff" /></AddNew>
        <SearchBox $width={38} $gap={2}>
          <SearchInput aria-label="Search blueprint" placeholder="Search" />
          <Magnifier />
        </SearchBox>
        <ViewOptions aria-label="View options"><BlueEye /><Down /></ViewOptions>
      </FilterRow>
      <BlueprintBody>
        <Tree>
          <TreeSection>
            <TreeHead title="Graphs" open />
            <TreeRow>
              <Twisty $width={9}><Closed /></Twisty>
              <GraphGlyph />
              <RowName>EventGraph</RowName>
            </TreeRow>
          </TreeSection>
          <TreeSection><TreeHead title="Functions" note="(34 Overridable)" /></TreeSection>
          <TreeSection><TreeHead title="Macros" /></TreeSection>
          <TreeSection>
            <TreeHead title="Variables" open />
            <TreeRow $bold>
              <Twisty $width={9}><Closed /></Twisty>
              Animations
            </TreeRow>
            {variables.map((v) => (
              <TreeRow key={v} $indent={12}>
                <WidgetIcon />
                <RowName>{v}</RowName>
                <VisibilityToggle aria-label={`Toggle ${v}`}><DarkEye /></VisibilityToggle>
              </TreeRow>
            ))}
          </TreeSection>
        </Tree>
        <ScrollTrack><ScrollThumb $height={241} /></ScrollTrack>
      </BlueprintBody>
    </Panel>
  </Dock>
);

const Section = ({ title, body, children }: { title: string; body: number; children: React.ReactNode }) => (
  <Category $body={body}>
    <CategoryHead><Twisty $width={11}><Opened /></Twisty>{title}</CategoryHead>
    {children}
  </Category>
);

const Name = ({ text, expandable, htmlFor }: { text: string; expandable?: boolean; htmlFor?: string }) => (
  <PropName htmlFor={htmlFor}>
    <Twisty $width={13}>{expandable && <Closed />}</Twisty>
    {text}
  </PropName>
);

const Details = () => {
  const id = useId();
  const [inherit, setInherit] = useState(true);
  return (
    <Dock>
      <PanelHeading icon={<InfoIcon />} title="Details" />
      <Panel>
        <FilterRow>
          <SearchBox $width={95} $gap={0}>
            <SearchInput aria-label="Search details" placeholder="Search" />
            <Magnifier />
          </SearchBox>
          <MatrixButton aria-label="Property matrix"><MatrixIcon /></MatrixButton>
          <ViewOptions aria-label="View options"><BlueEye /><Down /></ViewOptions>
        </FilterRow>
        <DetailsBody>
          <Section title="Appearance" body={82}>
            <Prop>
              <Name text="Color and Opacity" expandable />
              <Swatch aria-label="Color and Opacity" $color="#fff" $width={79} />
            </Prop>
            <Prop>
              <Name text="Foreground Color" expandable />
              <Swatch aria-label="Foreground Color" $color="#f0f" $width={27} />
              <InheritLabel>
                <Check checked={inherit} onChange={() => setInherit(!inherit)} />
                Inherit
              </InheritLabel>
            </Prop>
            <Prop>
              <Name text="Padding" expandable htmlFor={`${id}pad`} />
              <NumberBox $width={79}><NumberInput id={`${id}pad`} defaultValue="0.0" /></NumberBox>
            </Prop>
          </Section>
          <Section title="Designer" body={92}>
            <Prop $height={80}>
              <Name text="Preview Background" />
              <Thumbnail>None</Thumbnail>
              <AssetActions>
                <AssetMenu aria-label="Choose asset"><Down fill="#fff" /></AssetMenu>
                <AssetTools>
                  <svg width="12" height="12" viewBox="0 0 12 12"><path d="M0 6 6 0V4H12V8H6V12Z" fill="#dcdcdc" /></svg>
                  <Magnifier ink="#dcdcdc" />
                </AssetTools>
              </AssetActions>
            </Prop>
          </Section>
          <Section title="Input" body={61}>
            <Prop>
              <Name text="Priority" htmlFor={`${id}pri`} />
              <NumberBox $width={75}>
                <NumberInput id={`${id}pri`} defaultValue="0" />
                <svg width="9" height="9" viewBox="0 0 9 9"><path d="M3 0H9V6ZM0 3V9H6Z" fill="#111" /></svg>
              </NumberBox>
            </Prop>
            <Prop $height={26}>
              <Name text="Stop Action" htmlFor={`${id}stop`} />
              <Check id={`${id}stop`} />
            </Prop>
          </Section>
          <Section title="Interaction" body={37}>
            <Prop>
              <Name text="Is Focusable" htmlFor={`${id}focus`} />
              <Check id={`${id}focus`} />
            </Prop>
          </Section>
          <Section title="Performance" body={30}>
            <Prop $height={26}>
              <Name text="Tick Frequency" htmlFor={`${id}tick`} />
              <SelectWrap>
                <TickSelect id={`${id}tick`}><option>Auto</option><option>Never</option></TickSelect>
                <Down />
              </SelectWrap>
            </Prop>
          </Section>
          <DetailsScroll><ScrollThumb $height={197} /></DetailsScroll>
        </DetailsBody>
      </Panel>
    </Dock>
  );
};

/* ------------------------------------------------------------------ */
/* Application                                                         */
/* ------------------------------------------------------------------ */

const docs = ['ControlsWidget*', 'AbilityUI1*', 'MainHUD'];
const menus = ['File', 'Edit', 'Asset', 'View', 'Debug', 'Window', 'Help'];

export default function App() {
  return (
    <Window>
      <Global />
      <Paints />
      <TitleBar>
        <UnrealLogo />
        <TabStrip>
          {docs.map((name, i) => (
            <DocTab key={name} $active={i === 0} $level={3 - i}>
              <DocIcon />
              <TabLabel>{name}</TabLabel>
              <CloseMark aria-label={`Close ${name}`}><Cross /></CloseMark>
            </DocTab>
          ))}
        </TabStrip>
        <Tutorial aria-label="Tutorials"><CapIcon /></Tutorial>
        <WindowControls>
          <WindowButton aria-label="Minimize">
            <svg width="11" height="4"><rect width="11" height="4" fill="#fff" /></svg>
          </WindowButton>
          <WindowButton aria-label="Restore">
            <svg width="11" height="11" viewBox="0 0 11 11" fill="none" stroke="#fff" strokeWidth="1.500"><path d="M3 3V1H10V8H8M1 3H8V10H1ZM4 6H5V7H4Z" /></svg>
          </WindowButton>
          <WindowButton aria-label="Close" $wide>
            <svg width="10" height="10" viewBox="0 0 10 10"><path d="M1 1 9 9M9 1 1 9" stroke="#fff" strokeWidth="2.400" /></svg>
          </WindowButton>
        </WindowControls>
      </TitleBar>
      <MenuBar>
        {menus.map((m) => <MenuItem key={m}>{m}</MenuItem>)}
        <ParentClass>Parent class:<ClassLink href="#user-widget">User Widget</ClassLink></ParentClass>
      </MenuBar>
      <ToolbarRow>
        <Tools>
          <ToolGroup>
            <ToolButton $width={54}><CompileIcon />Compile</ToolButton>
            <DropArrow $width={24} aria-label="Compile options"><Down /></DropArrow>
          </ToolGroup>
          <ToolGroup>
            <ToolButton $width={50}><SaveIcon />Save</ToolButton>
            <ToolButton $width={48}><BrowseIcon />Browse</ToolButton>
          </ToolGroup>
          <ToolGroup>
            <ToolButton $width={52}><FindIcon />Find</ToolButton>
          </ToolGroup>
          <ToolGroup>
            <ToolButton $width={93}><SettingsIcon />Class Settings</ToolButton>
            <ToolButton $width={88} $active><DefaultsIcon />Class Defaults</ToolButton>
          </ToolGroup>
          <ToolGroup>
            <ToolButton $width={54}><PlayIcon />Play</ToolButton>
            <DropArrow $width={19} aria-label="Play options"><Down /></DropArrow>
            <DebugFilter>
              <SelectWrap>
                <DebugSelect id="debug-object"><option>No debug object selected</option></DebugSelect>
                <Down />
              </SelectWrap>
              <label htmlFor="debug-object">Debug Filter</label>
            </DebugFilter>
          </ToolGroup>
        </Tools>
        <Modes>
          <ModeButton><DesignerIcon />Designer</ModeButton>
          <Chevron h={20} ink="#b5b5b5" />
          <ModeGap />
          <ModeButton $active><GraphModeIcon />Graph</ModeButton>
        </Modes>
      </ToolbarRow>
      <Workspace>
        <Sidebar>
          <MyBlueprint />
          <Details />
        </Sidebar>
        <GraphColumn>
          <PanelHeading icon={<GraphGlyph />} title="Event Graph" />
          <GraphFrame><Graph /></GraphFrame>
          <PanelHeading icon={<CompilerIcon />} title="Compiler Results" />
        </GraphColumn>
      </Workspace>
    </Window>
  );
}

const ModeGap = styled.span`
  width: 4px;
`;
